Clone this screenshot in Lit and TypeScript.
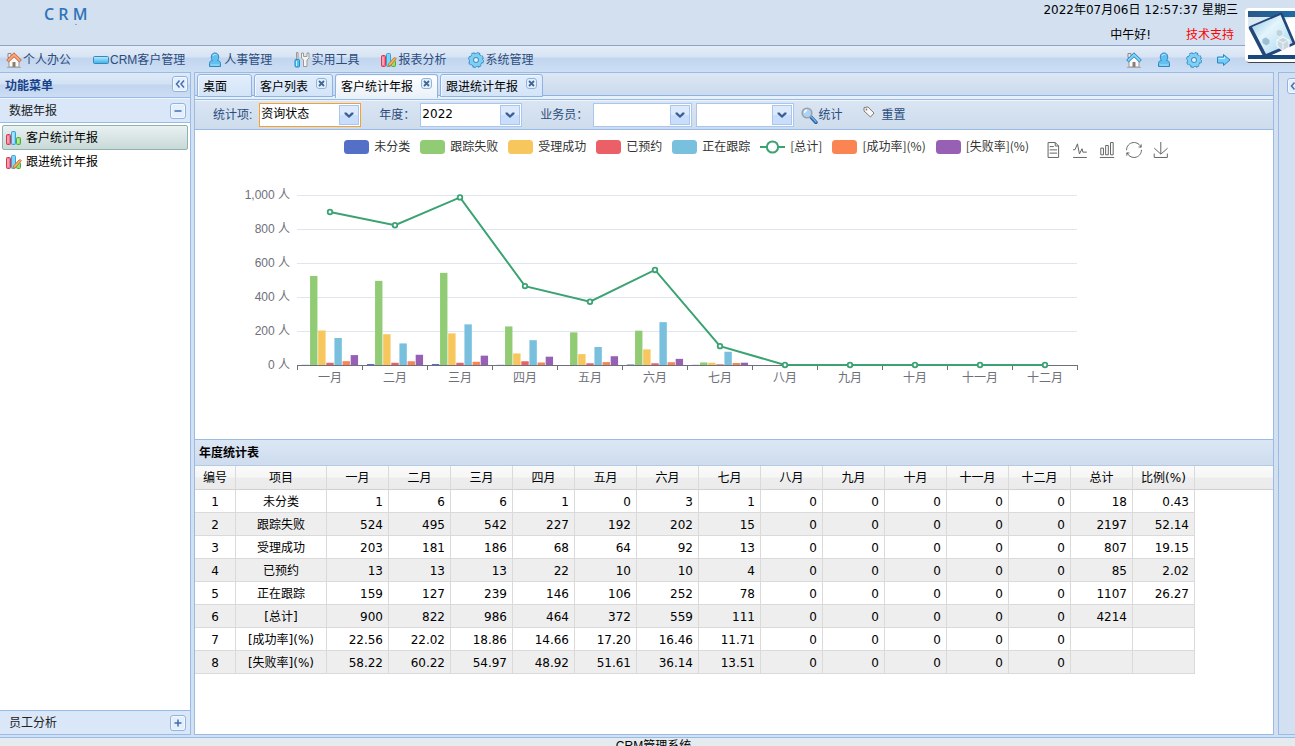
import { LitElement, html, svg, css, nothing } from "lit";
import { customElement, state } from "lit/decorators.js";
import { classMap } from "lit/directives/class-map.js";

const MONTHS = ["一月", "二月", "三月", "四月", "五月", "六月", "七月", "八月", "九月", "十月", "十一月", "十二月"];

const pad = (values: string[]) => [...values, ...Array(12 - values.length).fill("0")];

interface Series {
  name: string;
  color: string;
  values: string[];
  total: string;
  ratio: string;
  line?: boolean;
}

const SERIES: Series[] = [
  { name: "未分类", color: "#5470c6", values: pad(["1", "6", "6", "1", "0", "3", "1"]), total: "18", ratio: "0.43" },
  { name: "跟踪失败", color: "#91cc75", values: pad(["524", "495", "542", "227", "192", "202", "15"]), total: "2197", ratio: "52.14" },
  { name: "受理成功", color: "#f7c65d", values: pad(["203", "181", "186", "68", "64", "92", "13"]), total: "807", ratio: "19.15" },
  { name: "已预约", color: "#ea6066", values: pad(["13", "13", "13", "22", "10", "10", "4"]), total: "85", ratio: "2.02" },
  { name: "正在跟踪", color: "#78c0dd", values: pad(["159", "127", "239", "146", "106", "252", "78"]), total: "1107", ratio: "26.27" },
  { name: "[总计]", color: "#3ba272", values: pad(["900", "822", "986", "464", "372", "559", "111"]), total: "4214", ratio: "", line: true },
  { name: "[成功率](%)", color: "#fa8452", values: pad(["22.56", "22.02", "18.86", "14.66", "17.20", "16.46", "11.71"]), total: "", ratio: "" },
  { name: "[失败率](%)", color: "#9760b4", values: pad(["58.22", "60.22", "54.97", "48.92", "51.61", "36.14", "13.51"]), total: "", ratio: "" },
];

const homeShape = (roof: string, edge: string) => html`<svg width="16" height="16" viewBox="0 0 16 16" aria-hidden="true">
  <path d="M2 1.500h3v4h-3z" fill="#eee" stroke="#888" />
  <path d="M3 8.500 8 4l5 4.500v6.500H3z" fill="#fafafa" stroke="#999" />
  <path d="M6.500 10h3v5h-3z" fill="#8a7f78" />
  <path d="M8 .8 15.300 8l-2 1.900L8 4.800 2.700 9.900.7 8z" fill="${roof}" stroke="${edge}" />
  <path d="M1 15.500h14" stroke="#aaa" /></svg>`;

const ICONS: Record<string, unknown> = {
  home: homeShape("#f5a57c", "#cc6335"),
  homeBlue: homeShape("#7fd3f7", "#2583bd"),
  card: html`<svg width="16" height="16" viewBox="0 0 16 16" aria-hidden="true">
    <defs><linearGradient id="cg" x2="0" y2="1"><stop stop-color="#b5ebff" /><stop offset="1" stop-color="#38b2ea" /></linearGradient></defs>
    <rect x=".5" y="4.500" width="15" height="7" rx="1" fill="url(#cg)" stroke="#3d86b8" /></svg>`,
  user: html`<svg width="16" height="16" viewBox="0 0 16 16" aria-hidden="true">
    <path d="M2.500 14.500v-3c0-2 1.300-2.800 3-3C3.300 6 4 1 8 1s4.700 5 2.500 7.500c1.700.2 3 1 3 3v3z" fill="#62c0f0" stroke="#2f86c1" />
    <path d="M6 4c.4-1.400 2-2 3.400-1.200" stroke="#c9f0ff" fill="none" /><path d="M3.500 13h9" stroke="#a7e2fb" /></svg>`,
  tools: html`<svg width="16" height="16" viewBox="0 0 16 16" aria-hidden="true">
    <path d="M2.500 .5h1.500v7h-1.500z" fill="#eee" stroke="#999" />
    <path d="M1 8.500q0-1 1-1h2.500q1 0 1 1v5.500q0 1-1 1H2q-1 0-1-1z" fill="#4fc3f7" stroke="#2d87b8" />
    <path d="M2.500 9v5" stroke="#c4effd" />
    <path d="M7.500 1v5l2 2v6.500h3.500V8l2-2V1h-2v3.500h-3.500V1z" fill="#f4f4f2" stroke="#9d9a94" /></svg>`,
  bars: html`<svg width="16" height="16" viewBox="0 0 16 16" aria-hidden="true">
    <rect x=".5" y="4.500" width="4" height="10" rx="1" fill="#f5728a" stroke="#d4384f" />
    <rect x="5.500" y="1.500" width="4" height="13" rx="1" fill="#7fd6fb" stroke="#3b9fd6" />
    <rect x="10.500" y="7.500" width="4" height="7" rx="1" fill="#8ddf72" stroke="#4faa3c" />
    <path d="M2 6v7" stroke="#ffd0d8" /><path d="M7 3v10" stroke="#d6f4ff" /><path d="M12 9v4" stroke="#d5f7c9" /></svg>`,
  barsPen: html`<svg width="16" height="16" viewBox="0 0 16 16" aria-hidden="true">
    <rect x=".5" y="3.500" width="4" height="11" rx="1" fill="#f5728a" stroke="#d4384f" />
    <rect x="5.500" y="1.500" width="4" height="13" rx="1" fill="#7fd6fb" stroke="#3b9fd6" />
    <rect x="10.500" y="8.500" width="4" height="6" rx="1" fill="#8ddf72" stroke="#4faa3c" />
    <path d="M2 5v8" stroke="#ffd0d8" />
    <path d="M7 14.500 7.500 12 13 6q1.500-1 2.300.7L10 13z" fill="#f8b35d" stroke="#c9793a" /></svg>`,
  gear: html`<svg width="16" height="16" viewBox="0 0 16 16" aria-hidden="true">
    <circle cx="8" cy="8" r="6.500" fill="none" stroke="#3a8fc7" stroke-width="3" stroke-dasharray="3 2.100" />
    <circle cx="8" cy="8" r="4.500" fill="none" stroke="#3a8fc7" stroke-width="5" />
    <circle cx="8" cy="8" r="4.500" fill="none" stroke="#7fcff5" stroke-width="3.400" />
    <circle cx="8" cy="8" r="6.300" fill="none" stroke="#7fcff5" stroke-width="1.600" stroke-dasharray="2.200 2.750" />
    <circle cx="8" cy="8" r="2.500" fill="#e4f1fb" stroke="#3a8fc7" /></svg>`,
  exit: html`<svg width="16" height="16" viewBox="0 0 16 16" aria-hidden="true">
    <path d="M1.500 5h6V2.500L14 8l-6.500 5.500V11h-6z" fill="#6fcdf8" stroke="#2f86c1" stroke-linejoin="round" />
    <path d="M2.500 6.500h6V5" stroke="#c9f0ff" fill="none" /></svg>`,
  search: html`<svg width="17" height="17" viewBox="0 0 17 17" aria-hidden="true">
    <path d="m9.500 9.500 5.500 6" stroke="#2c5fa0" stroke-width="3.400" stroke-linecap="round" />
    <path d="m10.500 10 4.500 5" stroke="#74b4ea" stroke-width="1.400" stroke-linecap="round" />
    <circle cx="6" cy="6" r="4.800" fill="#a8d4fa" stroke="#a0a0a0" stroke-width="1.600" />
    <path d="M3.500 6q.3-2.500 2.500-2.700" stroke="#fff" stroke-width="1.400" fill="none" /></svg>`,
  tag: html`<svg width="12" height="12" viewBox="0 0 12 12" aria-hidden="true">
    <path d="M1 1.500 5 1l6 6-3.500 4L1 5z" fill="#f7f7f5" stroke="#807c78" />
    <circle cx="3.500" cy="3.500" r=".9" fill="#807c78" /></svg>`,
};

const glyph = (d: string) => html`<svg width="16" height="16" viewBox="0 0 16 16" aria-hidden="true">
  <rect x=".5" y=".5" width="15" height="15" rx="2.500" fill="#f3f8fe" stroke="#8fb4e3" />
  <rect x="2" y="2" width="12" height="12" rx="1" fill="#e4effb" />
  <path d="${d}" fill="none" stroke="#3f6fae" stroke-width="1.500" /></svg>`;

const CHEVRONS = "M7.500 4.500 4.500 8l3 3.500M12 4.500 9 8l3 3.500";

const TOOLBOX: [string, string][] = [
  ["数据视图", "M17.500,17.300H33 M45.400,29.500h-28 M11.500,2v56H51V14.800L38.400,2H11.500z M38.400,2.200v12.700H51 M45.400,41.700h-28"],
  ["切换为折线图", "M4.100,28.900h7.100l9.300-22l7.400,38l9.700-19.700l3,12.800h14.900M4.100,58h51.400"],
  ["切换为柱状图", "M6.700,22.900h10V48h-10V22.900z M24.900,13h10v35h-10V13z M43.200,2h10v46h-10V2z M3.100,58h53.700"],
  ["还原", "M47,18.900h9.800V8.700 M56.300,20.100 C52.100,9,40.500,0.600,26.800,2.100C12.600,3.700,1.600,16.200,2.100,30.600 M13,41.100H3.100v10.200 M3.700,39.900c4.200,11.100,15.800,19.500,29.500,18 c14.200-1.600,25.200-14.100,24.700-28.500"],
  ["保存为图片", "M4.700,22.900L29.300,45.500L54.700,23.400M4.600,43.600L4.600,58L53.800,58L53.800,43.600M29.200,45.100L29.200,0"],
];

@customElement("year-chart")
export class YearChart extends LitElement {
  static styles = css`
    :host { display: block; width: 91%; min-width: 860px; }
    .top { display: flex; justify-content: flex-end; align-items: flex-start; gap: 16px; padding: 8px 7px 0 0; height: 32px; box-sizing: border-box; }
    .legend { display: flex; gap: 10px; font-family: "Noto Sans CJK SC", sans-serif; }
    button { border: 0; padding: 0; margin: 0; background: none; font: inherit; color: #333; cursor: pointer; }
    .entry { display: flex; gap: 5px; height: 16px; line-height: 16px; white-space: nowrap; }
    .entry svg { margin-top: 2px; }
    .tools { display: flex; gap: 11px; padding-top: 4px; }
    .tools button { display: block; width: 16px; height: 16px; }
    .tools svg { display: block; }
    .plot { display: block; width: 100%; height: 277px; font-size: 12px; }
  `;

  @state() private width = 981;
  private watcher?: ResizeObserver;

  connectedCallback() {
    super.connectedCallback();
    this.watcher = new ResizeObserver((entries) => {
      const w = Math.round(entries[0].contentRect.width);
      if (w) this.width = w;
    });
    this.watcher.observe(this);
  }

  disconnectedCallback() {
    this.watcher?.disconnect();
    super.disconnectedCallback();
  }

  private plot() {
    const left = 102;
    const right = this.width - 99;
    const base = 203;
    const scale = 0.17;
    const band = (right - left) / 12;
    const step = band / 8;
    const barWidth = step * 0.91;
    const bars = SERIES.filter((s) => !s.line);
    const line = SERIES.find((s) => s.line)!;
    const center = (m: number) => left + band * (m + 0.5) + 0.5;
    const points = line.values.map((v, m) => [center(m), base - Number(v) * scale]);
    return svg`
      ${[0, 200, 400, 600, 800, 1000].map((v) => {
        const y = base - v * scale;
        return svg`
          ${v ? svg`<path d="M${left} ${y + 0.5}H${right}" stroke="#e0e6f1" />` : nothing}
          <text x="${left - 7}" y="${y + 4}" text-anchor="end" fill="#6e7079">${v.toLocaleString("en-US")} 人</text>`;
      })}
      ${bars.map((s, i) => s.values.map((v, m) => {
        const h = Number(v) * scale;
        return h ? svg`<rect x="${center(m) + (i - 3) * step - barWidth / 2}" y="${base - h}" width="${barWidth}" height="${h}" fill="${s.color}" />` : nothing;
      }))}
      <path d="M${left} ${base + 0.5}H${right}" stroke="#6e7079" />
      ${Array.from({ length: 13 }, (_, i) => svg`<path d="M${Math.round(left + band * i) + 0.5} ${base}v5" stroke="#6e7079" />`)}
      ${MONTHS.map((name, m) => svg`<text x="${center(m)}" y="${base + 17}" text-anchor="middle" fill="#6e7079">${name}</text>`)}
      <polyline points="${points.map((p) => p.join(",")).join(" ")}" fill="none" stroke="#3ba272" stroke-width="2" />
      ${points.map(([x, y]) => svg`<circle cx="${x}" cy="${y}" r="2.300" fill="#fff" stroke="#3ba272" stroke-width="1.800" />`)}
    `;
  }

  render() {
    return html`
      <div class="top">
        <div class="legend">
          ${SERIES.map((s) => html`<button class="entry">
            <svg width="25" height="14" aria-hidden="true">
              ${s.line
                ? svg`<path d="M0 7h25" stroke="${s.color}" stroke-width="2" /><circle cx="12.500" cy="7" r="5.600" fill="#fff" stroke="${s.color}" stroke-width="2" />`
                : svg`<rect width="25" height="14" rx="3.500" fill="${s.color}" />`}
            </svg><span>${s.name}</span></button>`)}
        </div>
        <div class="tools">
          ${TOOLBOX.map(([label, d]) => html`<button aria-label="${label}">
            <svg width="16" height="16" viewBox="0 0 60 60" overflow="visible"><path d="${d}" fill="none" stroke="#666" vector-effect="non-scaling-stroke" /></svg>
          </button>`)}
        </div>
      </div>
      <svg class="plot" role="img" aria-label="客户统计年报">${this.plot()}</svg>
    `;
  }
}

const NAV: [string, string][] = [
  ["home", "个人办公"], ["card", "CRM客户管理"], ["user", "人事管理"],
  ["tools", "实用工具"], ["barsPen", "报表分析"], ["gear", "系统管理"],
];

const QUICK: [string, string][] = [["homeBlue", "首页"], ["user", "个人"], ["gear", "设置"], ["exit", "退出"]];

const TABS = [
  { name: "桌面", closable: false },
  { name: "客户列表", closable: true },
  { name: "客户统计年报", closable: true },
  { name: "跟进统计年报", closable: true },
];

@customElement("app-root")
export class AppRoot extends LitElement {
  static styles = css`
    :host {
      display: flex; flex-direction: column; height: 100vh; overflow: hidden; background: #d2e0f0;
      font: 12px/16px "Liberation Sans", "Noto Sans CJK SC", sans-serif; color: #000;
    }
    * { box-sizing: border-box; }
    button { border: 0; padding: 0; margin: 0; background: none; font: inherit; color: inherit; cursor: pointer; }
    svg { display: block; flex: none; }
    .wide { font-family: "DejaVu Sans", "Noto Sans CJK SC", sans-serif; }

    .banner { position: relative; flex: none; display: flex; justify-content: space-between; height: 45px; padding: 0 57px 0 44px; }
    .brand { position: relative; margin: 0; padding-top: 2px; font: 600 16px/24px "Open Sans", sans-serif; color: #2f74b8; }
    .brand::after { content: ""; position: absolute; left: 31px; top: 24px; width: 2px; height: 1px; background: #86acd4; }
    .status { display: grid; grid-template-rows: 20px 29px; text-align: right; line-height: 20px; white-space: nowrap; }
    .greet { display: flex; justify-content: flex-end; align-items: center; gap: 35px; padding-right: 4px; }
    .greet a { color: #f00; text-decoration: none; }
    .photo { position: absolute; right: 0; top: 8px; z-index: 2; }

    .nav { flex: none; display: flex; align-items: center; height: 27px; padding: 1px 63px 0 6px; gap: 22px; color: #2c4c7c;
      border-top: 1px solid #88a3cc; background: linear-gradient(#e4edf8 0, #d7e3f3 11px, #c1d5ef 12px, #cddff4 100%); }
    .nav button { display: flex; align-items: center; gap: 1px; white-space: nowrap; }
    .quick { display: flex; gap: 14px; margin-left: auto; }

    .work { flex: 1; min-height: 0; display: grid; grid-template-columns: 191px minmax(0, 1fr) 17px; column-gap: 3px; padding-bottom: 2px; }
    .side { display: flex; flex-direction: column; background: #fff; border: solid #99bbe8; border-width: 1px 1px 1px 0; }
    .bar { flex: none; display: flex; justify-content: space-between; align-items: center; padding: 0 2px 0 5px; }
    .bar h2 { margin: 0; font: inherit; }
    .title { height: 25px; color: #15428b; font-weight: 700; border-bottom: 1px solid #99bbe8; padding-bottom: 2px;
      background: linear-gradient(#dfeaf6 0, #d2e1f4 11px, #c1d5ef 12px, #ccddf3 100%); }
    .title h2 { padding-top: 3px; }
    .group { height: 25px; padding: 0 4px 0 9px; color: #222; background: #d9e7f8; border-bottom: 1px solid #99bbe8; border-top: 1px solid #eef5fd; }
    .group.low { border-top: 1px solid #99bbe8; border-bottom: 0; height: 24px; }
    .menu { flex: 1; margin: 0; padding: 2px; list-style: none; }
    .menu button { display: flex; align-items: center; gap: 4px; width: 100%; height: 25px; padding: 0 3px; border: 1px solid transparent; border-radius: 2px; }
    .menu li + li button { height: 24px; }
    .menu .on { border-color: #8db2b0; background: linear-gradient(#e9f1f1, #c8d9d8); }

    .main { display: flex; flex-direction: column; min-width: 0; border: 1px solid #99bbe8; background: #fff; margin-right: 1px; }
    .tabs { flex: none; display: flex; gap: 2px; height: 27px; padding: 1px 2px 0; border-bottom: 1px solid #99bbe8;
      background: linear-gradient(#dde7f4 0, #cbdaed 22px, #8db2e3 22px, #8db2e3 23px, #e9f1f8 23px); }
    .tab { display: flex; gap: 8px; height: 23px; padding: 3px 5px 0; border: 1px solid #8db2e3; border-radius: 3px 3px 0 0;
      background: linear-gradient(#e3eefb, #d3e4f8); white-space: nowrap; line-height: 19px; box-shadow: inset 1px 1px #f2f8fe; }
    .tab.plain { padding-right: 24px; }
    .tab.on { height: 24px; border-bottom: 0; background: linear-gradient(#fff, #e9f1f8); }

    .filters { flex: none; display: flex; align-items: center; height: 30px; padding: 0 18px; color: #2c4c7c;
      border-bottom: 1px solid #99bbe8; border-top: 1px solid #eef5fd; background: linear-gradient(#dae5f3, #cddcec); white-space: nowrap; }
    .filters label { flex: none; }
    .pick { position: relative; flex: none; width: 102px; height: 24px; margin: 0 18px 0 5px; border: 1px solid #a8c6ee; background: #fff; }
    .pick.hot { border-color: #f9a02b; margin-left: 7px; }
    .pick.slim { width: 99px; margin-right: 4px; }
    .pick.last { width: 98px; margin: 0 7px 0 0; }
    .pick select { display: block; width: 100%; height: 20px; padding: 0 22px 0 1px; border: 0; background: none; appearance: none; outline: 0; font: inherit; color: #000; }
    .pick svg { position: absolute; right: 1px; top: 1px; pointer-events: none; }
    .filters button { display: flex; align-items: center; height: 28px; }
    .filters .reset { gap: 6px; margin-left: 21px; }
    .filters .reset svg { margin-bottom: 6px; }

    .chart { flex: none; height: 309px; overflow: hidden; }
    .caption { flex: none; height: 27px; margin: 0; padding: 0 4px; font: inherit; font-weight: 700; line-height: 26px;
      border-top: 1px solid #99bbe8; border-bottom: 1px solid #b5c9e3; background: linear-gradient(#dce7f5, #cedcee); }
    .scroll { flex: 1; min-height: 0; overflow: hidden; }
    table { width: 100%; min-width: 1000px; table-layout: fixed; border-collapse: separate; border-spacing: 0; }
    .c-no { width: 41px; } .c-name { width: 91px; } .c-num { width: 62px; }
    th, td { height: 23px; padding: 0; font-weight: 400; text-align: center; border: solid #dadada; border-width: 0 1px 1px 0; white-space: nowrap; overflow: hidden; line-height: 16px; }
    th { height: 24px; border-bottom-color: #d0d0d0; background: linear-gradient(#fafafa 0, #f6f6f6 11px, #ededee 12px, #ebebec 100%); }
    td { padding-top: 2px; }
    .num { padding-right: 5px; text-align: right; }
    .even td { background: #eee; }
    th.rest { border-right: 0; }
    tr td.rest { border: 0; background: none; }

    .east { border: solid #99bbe8; border-width: 1px 0 1px 1px; background: #d2e0f2; overflow: hidden; padding: 5px 0 0 8px; }
    .foot { flex: none; height: 9px; overflow: hidden; text-align: center; padding-left: 12px; border-top: 1px solid #99bbe8; background: #e4ebee; }
  `;

  @state() private tab = 2;
  @state() private item = 0;

  private arrow() {
    return html`<svg width="20" height="20" viewBox="0 0 20 20" aria-hidden="true">
      <rect x=".5" y=".5" width="19" height="19" fill="#dceafc" stroke="#a8c6ee" />
      <rect x="1" y="10" width="18" height="9" fill="#c9defa" />
      <path d="M5.500 7.500h2l2.500 2.500 2.500-2.500h2v1.500L10 13 5.500 9z" fill="#3a5f95" /></svg>`;
  }

  private picker(id: string, label: string, kind: string, options: string[]) {
    return html`${label ? html`<label for="${id}">${label}</label>` : nothing}
      <div class="pick ${kind}">
        <select id="${id}" aria-label="${label || "人员"}">${options.map((o) => html`<option>${o}</option>`)}</select>
        ${this.arrow()}
      </div>`;
  }

  render() {
    return html`
      <header class="banner">
        <h1 class="brand">C R M</h1>
        <div class="status wide">
          <span>2022年07月06日 12:57:37 星期三</span>
          <div class="greet"><span>中午好!</span><a href="#">技术支持</a></div>
        </div>
        <svg class="photo" width="50" height="56" viewBox="0 0 50 56" aria-hidden="true">
          <defs>
            <linearGradient id="band"><stop stop-color="#2a5a88" /><stop offset="1" stop-color="#1f6ba5" /></linearGradient>
            <linearGradient id="pane" x2="1" y2="1"><stop stop-color="#8cc4e6" /><stop offset=".4" stop-color="#e4f5fc" /><stop offset="1" stop-color="#a4d5ee" /></linearGradient>
          </defs>
          <rect x="1" y="1.500" width="60" height="53.500" rx="4" fill="#444" />
          <rect x="0" y="0" width="60" height="54" rx="4" fill="#fff" />
          <path d="M3 3h47v6H3z" fill="url(#band)" /><path d="M3 47h47v4H3z" fill="#164a7d" />
          <path d="M3 9h47l-47 10z" fill="#dbe9f3" />
          <path d="M5 18 35 5q2-1 3 1l12 28q1 2-1 3L22 49q-3 1-4-1L4 21q-1-2 1-3z" fill="#24477a" />
          <path d="M7 19 35.500 7l12 28L21 46z" fill="url(#pane)" />
          <path d="m17 31 4-2 4 3v4l-4 2-4-3z" fill="#9dbfd2" stroke="#d9eef6" />
          <path d="m31 23 3-2 4 2v4l-4 2-3-2z" fill="#bdd4df" stroke="#e6f3f8" />
          <path d="m32 32 6-3 6 3v7l-6 4-6-5z" fill="#c9d8e0" stroke="#fff" /><path d="m32 32 6 3v7M38 35l6-3" stroke="#eef6fa" fill="none" />
        </svg>
      </header>

      <nav class="nav">
        ${NAV.map(([icon, text]) => html`<button>${ICONS[icon]}<span>${text}</span></button>`)}
        <div class="quick">${QUICK.map(([icon, text]) => html`<button aria-label="${text}">${ICONS[icon]}</button>`)}</div>
      </nav>

      <div class="work">
        <aside class="side">
          <div class="bar title"><h2>功能菜单</h2><button aria-label="收起">${glyph(CHEVRONS)}</button></div>
          <div class="bar group"><h2>数据年报</h2><button aria-label="折叠">${glyph("M4.500 8h7")}</button></div>
          <ul class="menu">
            ${[["bars", "客户统计年报"], ["barsPen", "跟进统计年报"]].map(([icon, text], i) => html`
              <li><button class=${classMap({ on: i === this.item })} @click=${() => (this.item = i)}>${ICONS[icon]}<span>${text}</span></button></li>`)}
          </ul>
          <div class="bar group low"><h2>员工分析</h2><button aria-label="展开">${glyph("M4.500 8h7M8 4.500v7")}</button></div>
        </aside>

        <main class="main">
          <div class="tabs">
            ${TABS.map((t, i) => html`<button class=${classMap({ tab: true, plain: !t.closable, on: i === this.tab })} @click=${() => (this.tab = i)}>
              <span>${t.name}</span>
              ${t.closable ? html`<svg width="11" height="11" viewBox="0 0 11 11" aria-hidden="true">
                <rect x=".5" y=".5" width="10" height="10" rx="2.500" fill="#e6f0fb" stroke="#8fb4dc" />
                <path d="m3 3 5 5M8 3 3 8" stroke="#3f6797" stroke-width="1.800" /></svg>` : nothing}
            </button>`)}
          </div>
          <div class="filters">
            ${this.picker("stat", "统计项:", "hot", ["资询状态"])}
            ${this.picker("year", "年度：", "wide", ["2022", "2021"])}
            ${this.picker("staff", "业务员：", "slim", [""])}
            ${this.picker("person", "", "last", [""])}
            <button>${ICONS.search}<span>统计</span></button>
            <button class="reset">${ICONS.tag}<span>重置</span></button>
          </div>
          <div class="chart"><year-chart></year-chart></div>
          <h2 class="caption">年度统计表</h2>
          <div class="scroll">
            <table class="wide">
              <colgroup><col class="c-no" /><col class="c-name" />${Array.from({ length: 14 }, () => html`<col class="c-num" />`)}<col /></colgroup>
              <thead>
                <tr>${["编号", "项目", ...MONTHS, "总计", "比例(%)"].map((h) => html`<th scope="col">${h}</th>`)}<th class="rest"></th></tr>
              </thead>
              <tbody>
                ${SERIES.map((s, i) => html`<tr class=${classMap({ even: i % 2 === 1 })}>
                  <td>${i + 1}</td><td>${s.name}</td>
                  ${[...s.values, s.total, s.ratio].map((v) => html`<td class="num">${v}</td>`)}
                  <td class="rest"></td></tr>`)}
              </tbody>
            </table>
          </div>
        </main>

        <aside class="east"><button aria-label="展开右侧栏">${glyph(CHEVRONS)}</button></aside>
      </div>
      <footer class="foot">CRM管理系统</footer>
    `;
  }
}
